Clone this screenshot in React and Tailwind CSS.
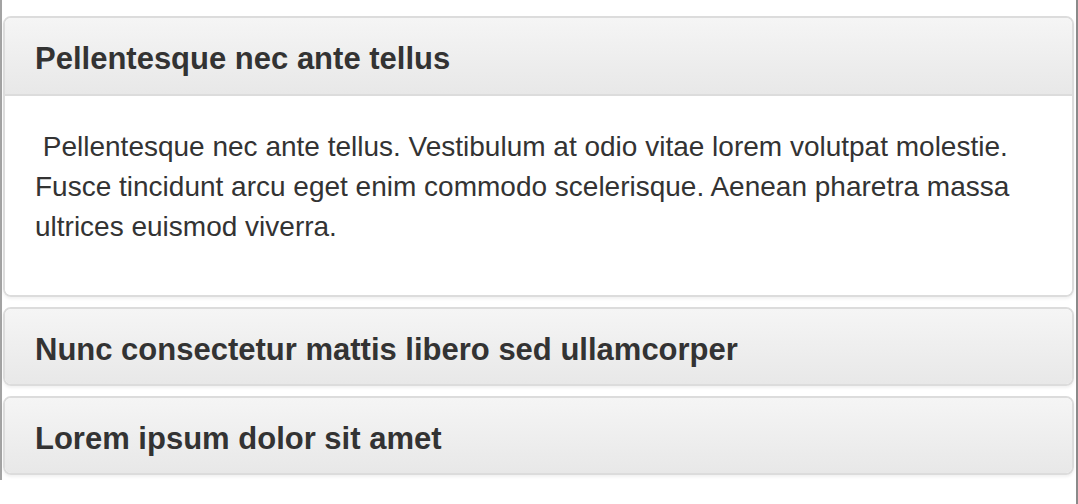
import React from "react";

function Heading({ children, h }) {
  return (
    <div className={`bg-gradient-to-b from-[#f5f5f5] to-[#e8e8e8] px-[30px] flex items-center pt-[6px] ${h}`}>
      <h4 className="text-[31px] leading-[36px] font-bold text-[#333]">{children}</h4>
    </div>
  );
}

export default function App() {
  return (
    <div
      className="w-[1078px] h-[504px] bg-white flex overflow-hidden"
      style={{ fontFamily: '"Liberation Sans", Arial, sans-serif' }}
    >
      <div className="w-[2px] h-[480px] bg-[#a3a3a3] shrink-0" />
      <div className="flex-1 pt-[16px] pl-[1px] pr-[2px] flex flex-col gap-[10px]">
        <div className="border-2 border-[#dcdcdc] rounded-[8px] overflow-hidden shadow-[0_2px_3px_rgba(0,0,0,0.06)]">
          <div className="border-b-2 border-[#dcdcdc]">
            <Heading h="h-[76px]">Pellentesque nec ante tellus</Heading>
          </div>
          <div className="bg-white px-[30px] pt-[31px] pb-[48px] text-[28px] leading-[40px] text-[#333]">
            &nbsp;Pellentesque nec ante tellus. Vestibulum at odio vitae lorem volutpat molestie. Fusce tincidunt arcu eget enim commodo scelerisque. Aenean pharetra massa ultrices euismod viverra.
          </div>
        </div>
        <div className="border-2 border-[#dcdcdc] rounded-[8px] overflow-hidden shadow-[0_2px_3px_rgba(0,0,0,0.06)]">
          <Heading h="h-[75px]">Nunc consectetur mattis libero sed ullamcorper</Heading>
        </div>
        <div className="border-2 border-[#dcdcdc] rounded-[8px] overflow-hidden shadow-[0_2px_3px_rgba(0,0,0,0.06)]">
          <Heading h="h-[75px]">Lorem ipsum dolor sit amet</Heading>
        </div>
      </div>
      <div className="w-[2px] h-full bg-[#8a8a8a] shrink-0" />
    </div>
  );
}
